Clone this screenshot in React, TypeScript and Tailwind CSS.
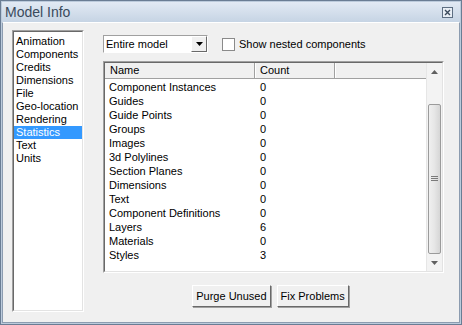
import { useState } from 'react'

const sections = ['Animation', 'Components', 'Credits', 'Dimensions', 'File', 'Geo-location', 'Rendering', 'Statistics', 'Text', 'Units']

const stats: [string, number][] = [
  ['Component Instances', 0],
  ['Guides', 0],
  ['Guide Points', 0],
  ['Groups', 0],
  ['Images', 0],
  ['3d Polylines', 0],
  ['Section Planes', 0],
  ['Dimensions', 0],
  ['Text', 0],
  ['Component Definitions', 0],
  ['Layers', 6],
  ['Materials', 0],
  ['Styles', 3],
]

function Sunken({ className, children }: { className?: string; children?: React.ReactNode }) {
  return (
    <div className={'border border-t-[#a0a0a0] border-l-[#a0a0a0] border-r-[#fff] border-b-[#fff] ' + (className ?? '')}>
      <div className="h-full border border-t-[#696969] border-l-[#696969] border-r-[#e3e3e3] border-b-[#e3e3e3] bg-white">{children}</div>
    </div>
  )
}

function WinButton({ label }: { label: string }) {
  return (
    <button className="h-[22px] px-[3px] whitespace-nowrap bg-[#f0f0f0] border border-t-white border-l-white border-r-[#696969] border-b-[#696969] shadow-[1px_1px_0_#a0a0a0] text-[11px] leading-none text-black">
      {label}
    </button>
  )
}

export default function App() {
  const [selected, setSelected] = useState('Statistics')
  const [nested, setNested] = useState(false)

  return (
    <div
      className="w-[462px] h-[325px] flex flex-col bg-[#bccbdc] border border-[#6a7d94] p-[1px] text-black"
      style={{ fontFamily: '"Liberation Sans", Arial, sans-serif' }}
    >
      <div className="h-[20px] flex items-center justify-between px-[3px] bg-gradient-to-b from-[#e2eaf4] to-[#c6d4e4]">
        <span className="text-[14px] text-[#3a4a5c]">Model Info</span>
        <span className="w-[11px] h-[11px] mr-[4px] border border-[#5d6e82] bg-[#e8eef5] flex items-center justify-center">
          <svg width="7" height="7" viewBox="0 0 7 7">
            <path d="M1 1L6 6M6 1L1 6" stroke="#3b4a5c" strokeWidth="1.4" />
          </svg>
        </span>
      </div>
      <div className="flex-1 flex bg-[#f0f0f0] border border-[#8c9cb0] border-t-white pl-[9px] pt-[7px]">
        <Sunken className="w-[72px] h-[282px]">
          <ul className="pt-[3px] text-[11px] leading-[13px]">
            {sections.map((s) => (
              <li
                key={s}
                onClick={() => setSelected(s)}
                className={'pl-[2px] h-[13px] whitespace-nowrap ' + (s === selected ? 'bg-[#3399ff] text-white' : '')}
              >
                {s}
              </li>
            ))}
          </ul>
        </Sunken>
        <div className="ml-[19px] w-[341px] flex flex-col">
          <div className="mt-[5px] h-[18px] flex items-center">
            <div className="w-[105px] h-[18px] flex items-center bg-white border border-t-[#a0a0a0] border-l-[#a0a0a0] border-r-white border-b-white">
              <span className="flex-1 pl-[2px] text-[11px]">Entire model</span>
              <span className="w-[16px] h-[16px] flex items-center justify-center bg-[#f0f0f0] border border-t-white border-l-white border-r-[#696969] border-b-[#696969]">
                <svg width="7" height="4" viewBox="0 0 7 4">
                  <path d="M0 0H7L3.5 4Z" fill="#000" />
                </svg>
              </span>
            </div>
            <label className="ml-[14px] flex items-center gap-[4px] text-[11px]">
              <span
                onClick={() => setNested(!nested)}
                className="w-[13px] h-[13px] bg-white border border-[#8a8a8a] flex items-center justify-center"
              >
                {nested && <span className="text-[10px]">✓</span>}
              </span>
              Show nested components
            </label>
          </div>
          <Sunken className="mt-[8px] h-[212px]">
            <div className="flex h-full">
              <div className="flex-1 flex flex-col">
                <div className="h-[16px] flex text-[11px] leading-[15px] bg-[#f0f0f0] border-b border-[#a0a0a0]">
                  <div className="w-[150px] pl-[5px] border-r border-[#a0a0a0] shadow-[1px_0_0_#fff]">Name</div>
                  <div className="w-[80px] pl-[5px] border-r border-[#a0a0a0] shadow-[1px_0_0_#fff]">Count</div>
                  <div className="flex-1" />
                </div>
                <div className="pt-[1px] text-[11px] leading-[14px]">
                  {stats.map(([name, n]) => (
                    <div key={name} className="flex h-[14px]">
                      <span className="w-[150px] pl-[4px] whitespace-nowrap">{name}</span>
                      <span className="pl-[5px]">{n}</span>
                    </div>
                  ))}
                </div>
              </div>
              <div className="w-[16px] flex flex-col bg-[#f3f3f3] border-l border-[#e6e6e6]">
                <div className="h-[17px] flex items-center justify-center">
                  <svg width="7" height="4" viewBox="0 0 7 4">
                    <path d="M3.5 0L7 4H0Z" fill="#606060" />
                  </svg>
                </div>
                <div className="mx-[1px] mt-[24px] h-[150px] rounded-[2px] border border-[#9b9b9b] bg-gradient-to-r from-[#f0f0f0] via-[#e6e6e6] to-[#d6d6d6] flex items-center justify-center">
                  <svg width="7" height="6" viewBox="0 0 7 6">
                    <path d="M0 0.5H7M0 2.5H7M0 4.5H7" stroke="#7a7a7a" />
                  </svg>
                </div>
                <div className="flex-1" />
                <div className="h-[17px] flex items-center justify-center">
                  <svg width="7" height="4" viewBox="0 0 7 4">
                    <path d="M0 0H7L3.5 4Z" fill="#606060" />
                  </svg>
                </div>
              </div>
            </div>
          </Sunken>
          <div className="mt-[12px] flex justify-center gap-[6px] pr-[6px]">
            <WinButton label="Purge Unused" />
            <WinButton label="Fix Problems" />
          </div>
        </div>
      </div>
    </div>
  )
}
